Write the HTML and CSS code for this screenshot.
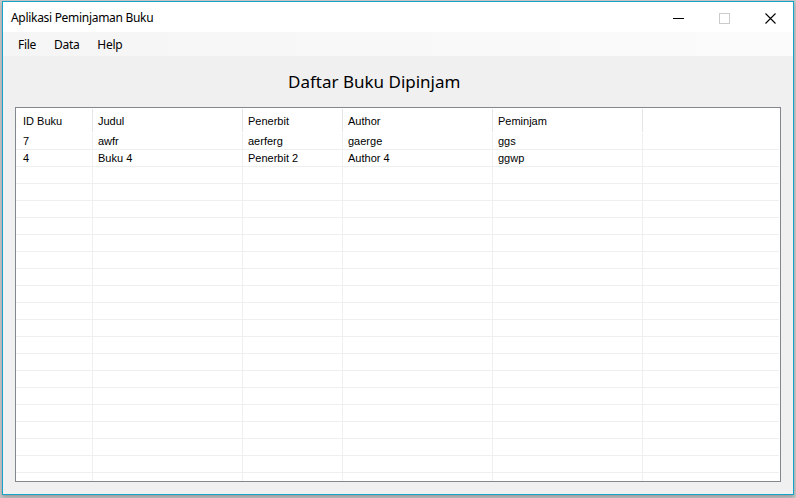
FILE: index.html
```html
<!DOCTYPE html>
<html>
<head>
<meta charset="utf-8">
<title>Aplikasi Peminjaman Buku</title>
<link rel="stylesheet" href="styles.css">
</head>
<body>
<div class="window">
  <div class="titlebar">
    <span class="title">Aplikasi Peminjaman Buku</span>
    <div class="controls">
      <span class="ctl"><svg width="11" height="11" viewBox="0 0 11 11"><line x1="0" y1="5.5" x2="11" y2="5.5" stroke="#000" stroke-width="1"/></svg></span>
      <span class="ctl"><svg width="11" height="11" viewBox="0 0 11 11"><rect x="0.5" y="0.5" width="10" height="10" fill="none" stroke="#cccccc" stroke-width="1"/></svg></span>
      <span class="ctl"><svg width="11" height="11" viewBox="0 0 11 11"><path d="M0.5 0.5 L10.5 10.5 M10.5 0.5 L0.5 10.5" stroke="#000" stroke-width="1.1"/></svg></span>
    </div>
  </div>
  <div class="menubar">
    <span class="menu">File</span>
    <span class="menu">Data</span>
    <span class="menu">Help</span>
  </div>
  <div class="content">
    <h1 class="heading">Daftar Buku Dipinjam</h1>
    <div class="grid">
      <div class="hrow">
        <div class="hc c1">ID Buku</div>
        <div class="hc c2">Judul</div>
        <div class="hc c3">Penerbit</div>
        <div class="hc c4">Author</div>
        <div class="hc c5">Peminjam</div>
        <div class="hc c6 last"></div>
      </div>
      <div class="rows">
        <div class="row"><div class="c c1">7</div><div class="c c2">awfr</div><div class="c c3">aerferg</div><div class="c c4">gaerge</div><div class="c c5">ggs</div><div class="c c6"></div></div>
        <div class="row"><div class="c c1">4</div><div class="c c2">Buku 4</div><div class="c c3">Penerbit 2</div><div class="c c4">Author 4</div><div class="c c5">ggwp</div><div class="c c6"></div></div>
        <div class="row"><div class="c c1"></div><div class="c c2"></div><div class="c c3"></div><div class="c c4"></div><div class="c c5"></div><div class="c c6"></div></div>
        <div class="row"><div class="c c1"></div><div class="c c2"></div><div class="c c3"></div><div class="c c4"></div><div class="c c5"></div><div class="c c6"></div></div>
        <div class="row"><div class="c c1"></div><div class="c c2"></div><div class="c c3"></div><div class="c c4"></div><div class="c c5"></div><div class="c c6"></div></div>
        <div class="row"><div class="c c1"></div><div class="c c2"></div><div class="c c3"></div><div class="c c4"></div><div class="c c5"></div><div class="c c6"></div></div>
        <div class="row"><div class="c c1"></div><div class="c c2"></div><div class="c c3"></div><div class="c c4"></div><div class="c c5"></div><div class="c c6"></div></div>
        <div class="row"><div class="c c1"></div><div class="c c2"></div><div class="c c3"></div><div class="c c4"></div><div class="c c5"></div><div class="c c6"></div></div>
        <div class="row"><div class="c c1"></div><div class="c c2"></div><div class="c c3"></div><div class="c c4"></div><div class="c c5"></div><div class="c c6"></div></div>
        <div class="row"><div class="c c1"></div><div class="c c2"></div><div class="c c3"></div><div class="c c4"></div><div class="c c5"></div><div class="c c6"></div></div>
        <div class="row"><div class="c c1"></div><div class="c c2"></div><div class="c c3"></div><div class="c c4"></div><div class="c c5"></div><div class="c c6"></div></div>
        <div class="row"><div class="c c1"></div><div class="c c2"></div><div class="c c3"></div><div class="c c4"></div><div class="c c5"></div><div class="c c6"></div></div>
        <div class="row"><div class="c c1"></div><div class="c c2"></div><div class="c c3"></div><div class="c c4"></div><div class="c c5"></div><div class="c c6"></div></div>
        <div class="row"><div class="c c1"></div><div class="c c2"></div><div class="c c3"></div><div class="c c4"></div><div class="c c5"></div><div class="c c6"></div></div>
        <div class="row"><div class="c c1"></div><div class="c c2"></div><div class="c c3"></div><div class="c c4"></div><div class="c c5"></div><div class="c c6"></div></div>
        <div class="row"><div class="c c1"></div><div class="c c2"></div><div class="c c3"></div><div class="c c4"></div><div class="c c5"></div><div class="c c6"></div></div>
        <div class="row"><div class="c c1"></div><div class="c c2"></div><div class="c c3"></div><div class="c c4"></div><div class="c c5"></div><div class="c c6"></div></div>
        <div class="row"><div class="c c1"></div><div class="c c2"></div><div class="c c3"></div><div class="c c4"></div><div class="c c5"></div><div class="c c6"></div></div>
        <div class="row"><div class="c c1"></div><div class="c c2"></div><div class="c c3"></div><div class="c c4"></div><div class="c c5"></div><div class="c c6"></div></div>
        <div class="row"><div class="c c1"></div><div class="c c2"></div><div class="c c3"></div><div class="c c4"></div><div class="c c5"></div><div class="c c6"></div></div>
        <div class="row"><div class="c c1"></div><div class="c c2"></div><div class="c c3"></div><div class="c c4"></div><div class="c c5"></div><div class="c c6"></div></div>
      </div>
    </div>
  </div>
</div>
</body>
</html>
```

FILE: styles.css
```css
* { box-sizing: border-box; }
html, body { margin: 0; padding: 0; }
body {
  width: 796px;
  height: 498px;
  overflow: hidden;
  background: #c9c9c9;
  padding: 1px 0 0 2px;
  font-family: "Noto Sans", "Open Sans", sans-serif;
}
.window {
  width: 792px;
  height: 494px;
  border: 1px solid #1aa1c9;
  background: #f0f0f0;
  display: flex;
  flex-direction: column;
  box-shadow: 0 2px 4px rgba(0,0,0,0.25);
}
.titlebar {
  height: 30px;
  flex-shrink: 0;
  background: #ffffff;
  display: flex;
  align-items: center;
  padding-left: 8px;
}
.title {
  font-size: 12px;
  color: #000;
  flex: 1;
  letter-spacing: -0.3px;
  padding-top: 1px;
}
.controls {
  display: flex;
  height: 30px;
  align-items: center;
}
.ctl {
  width: 46px;
  height: 30px;
  display: flex;
  align-items: center;
  justify-content: center;
  padding-top: 2px;
}
.ctl svg { display: block; }
.menubar {
  height: 24px;
  flex-shrink: 0;
  background: linear-gradient(to right, #f5f5f5, #fbfbfb);
  display: flex;
  align-items: center;
  padding-left: 8px;
}
.menu {
  font-size: 12px;
  color: #000;
  padding: 0 7px;
  margin-right: 4px;
  letter-spacing: -0.3px;
}
.content {
  flex: 1;
  min-height: 0;
  display: flex;
  flex-direction: column;
  padding: 0 12px 12px 12px;
}
.heading {
  margin: 0;
  height: 51px;
  flex-shrink: 0;
  padding: 14px 0 0 273px;
  font-size: 17px;
  font-weight: normal;
  color: #000;
  line-height: 24px;
}
.grid {
  flex: 1;
  min-height: 0;
  border: 1px solid #828790;
  background: #ffffff;
  overflow: hidden;
  font-family: "Liberation Sans", Arial, sans-serif;
  font-size: 11px;
  color: #000;
  display: flex;
  flex-direction: column;
}
.hrow {
  display: flex;
  height: 25px;
  flex-shrink: 0;
}
.hc {
  display: flex;
  align-items: center;
  padding-left: 5px;
  padding-top: 1px;
  position: relative;
}
.hc::after {
  content: "";
  position: absolute;
  right: 0;
  top: 1px;
  bottom: 1px;
  width: 1px;
  background: #e5e5e5;
}
.hc.last::after { display: none; }
.c1 { width: 77px; }
.c2 { width: 150px; }
.c3 { width: 100px; }
.c4 { width: 150px; }
.c5 { width: 150px; }
.c6 { flex: 1; }
.rows {
  display: flex;
  flex-direction: column;
}
.row {
  display: flex;
  height: 17px;
  flex-shrink: 0;
  border-bottom: 1px solid #efefef;
  margin-right: 1px;
}
.c {
  padding-left: 5px;
  line-height: 17px;
  border-right: 1px solid #efefef;
  white-space: nowrap;
}
.hc.c1, .c.c1 { padding-left: 7px; }
.c.c6 { border-right: none; }
```
